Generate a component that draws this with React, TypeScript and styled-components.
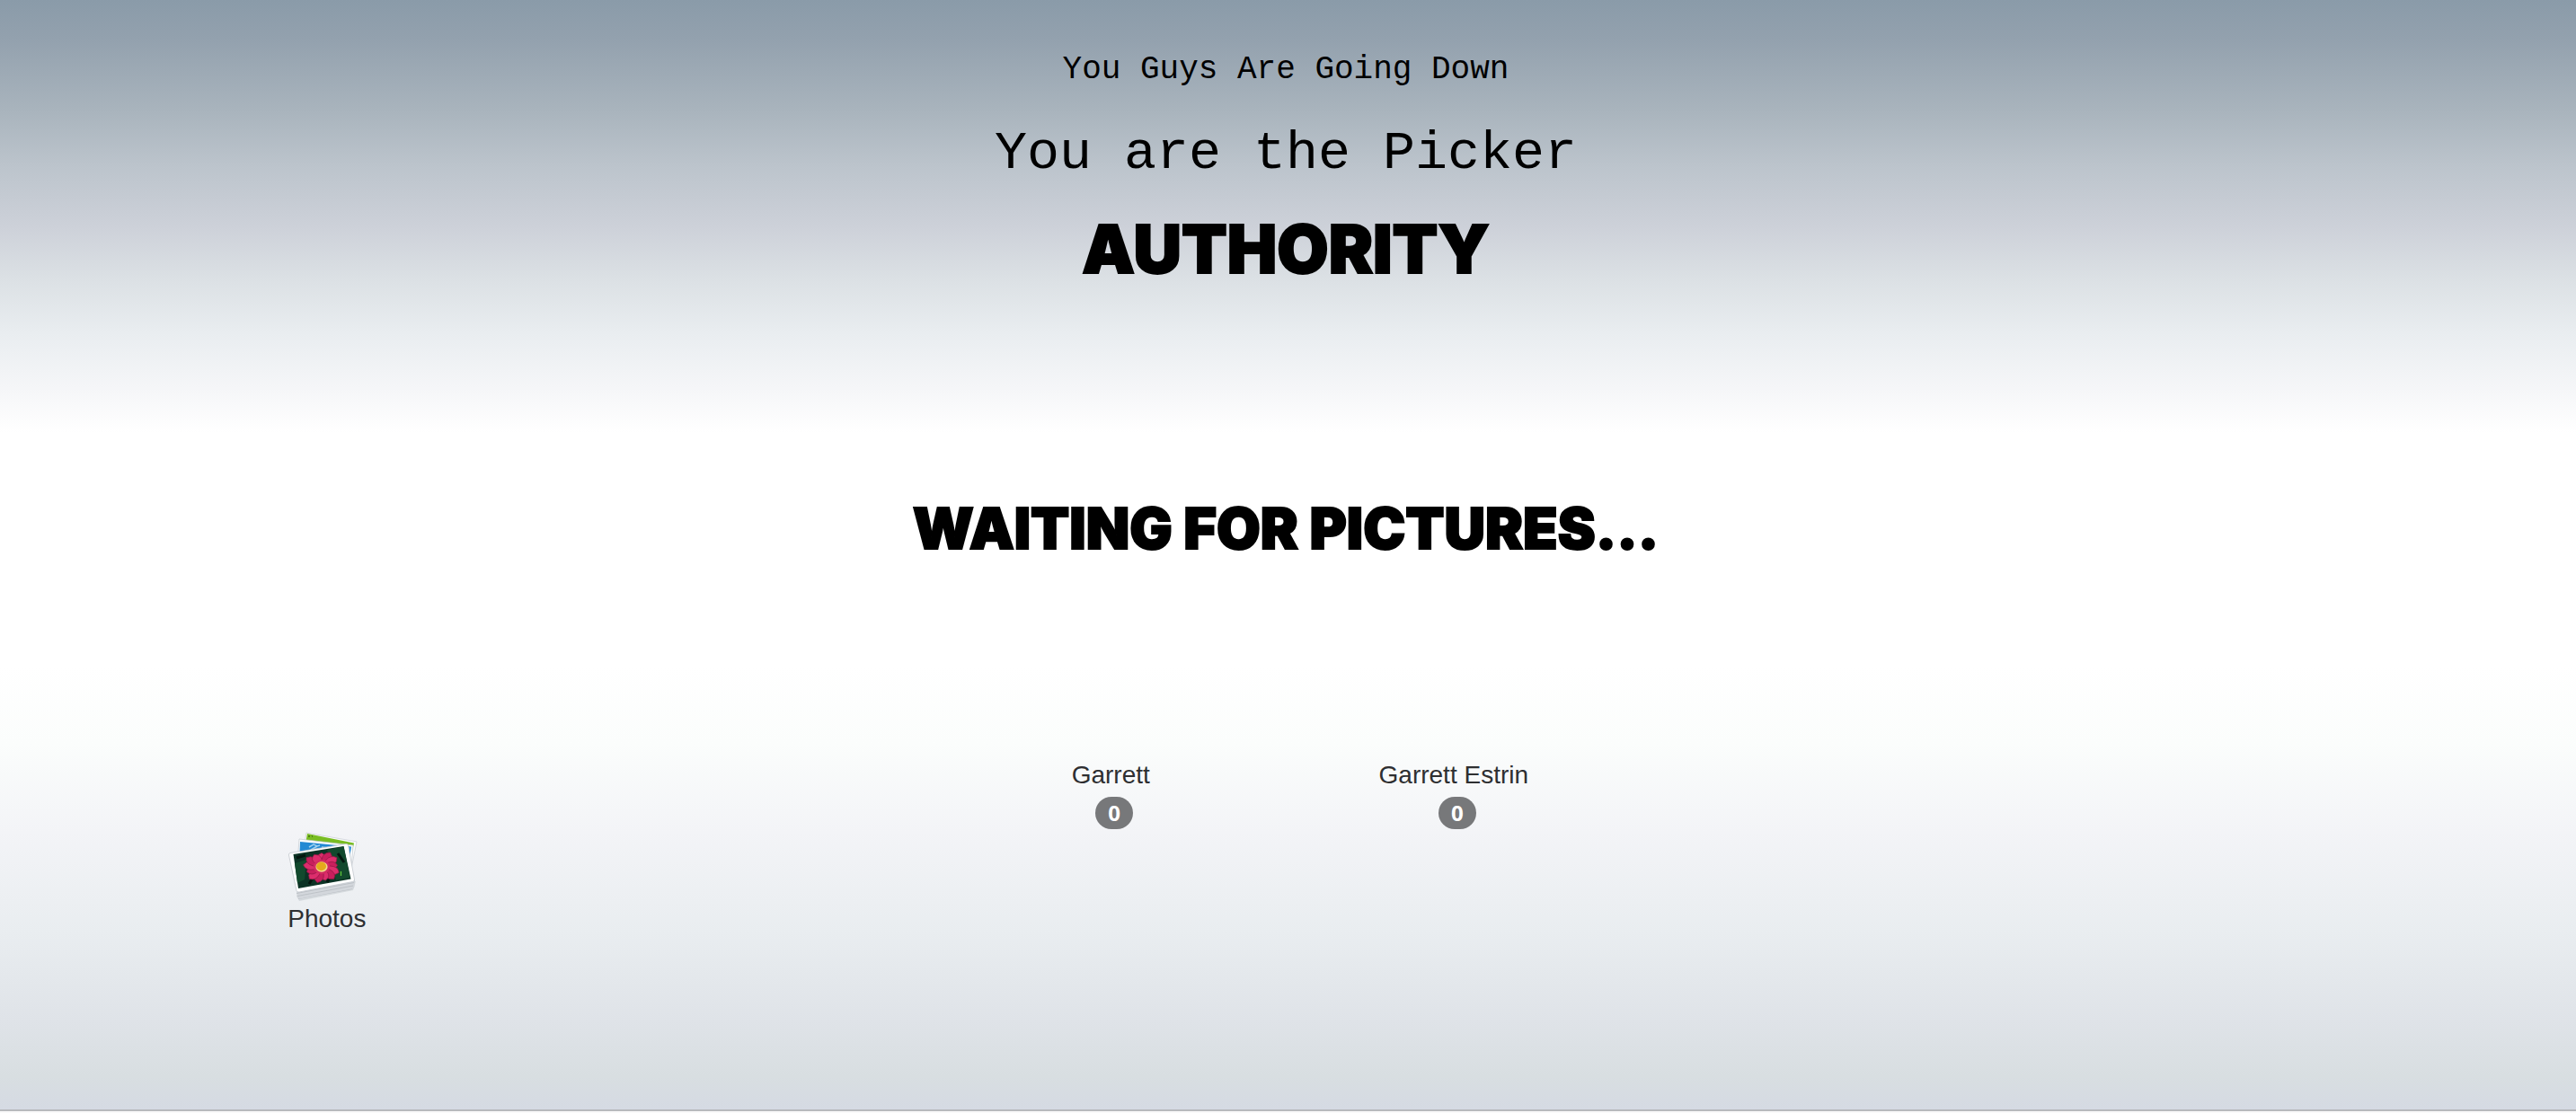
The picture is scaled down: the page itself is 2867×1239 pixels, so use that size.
import React from "react";
import styled, { createGlobalStyle } from "styled-components";

const GlobalStyle = createGlobalStyle`
  *, *::before, *::after { box-sizing: border-box; }
  body { margin: 0; background: #fafafa; color: #2e2f31; font-family: "Liberation Sans", Arial, sans-serif; font-size: 28px; line-height: 40px; }
`;

const Page = styled.main`
  display: flex;
  flex-direction: column;
  padding: 57px 5px 192px 0;
  border-bottom: 2px solid #b8babd;
  background: linear-gradient(
    #8a9ba9 0%, #93a1ae 3.5%, #a9b4bd 10%, #bcc4cc 15%, #cdd1d9 20.5%,
    #dbe0e4 25%, #e9edf0 30%, #f5f6f8 35%, #ffffff 39%, #ffffff 60%,
    #fbfdfc 67%, #f3f4f7 75%, #e9edf0 84%, #dfe3e8 92%, #d8dee1 97%, #d5dae3 100%
  );
`;

const Header = styled.header`
  display: flex;
  flex-direction: column;
  align-items: center;
  text-align: center;
  color: #000;
`;

const TypedLine = styled.p<{ $large?: boolean }>`
  margin: 0;
  font-family: "Liberation Mono", "Courier New", monospace;
  font-size: ${(p) => (p.$large ? 60 : 36)}px;
  line-height: ${(p) => (p.$large ? 68 : 42)}px;
  margin-bottom: ${(p) => (p.$large ? 32 : 38)}px;
`;

const Prompt = styled.h1`
  margin: 0;
  font: 900 74px/80px Inter, sans-serif;
  -webkit-text-stroke: 2px #000;
`;

const Status = styled.h2`
  margin: 237px 0 221px;
  text-align: center;
  color: #000;
  font: 900 63px/68px Inter, sans-serif;
  -webkit-text-stroke: 2px #000;
`;

const Container = styled.div`
  width: 80%;
  margin: 0 auto;
`;

const Players = styled.ul`
  display: grid;
  grid-template-columns: repeat(6, 1fr);
  margin: 0;
  padding: 0;
  list-style: none;
`;

const Player = styled.li`
  display: flex;
  flex-direction: column;
  align-items: center;
  gap: 4px;

  &:first-child { grid-column-start: 3; }
`;

const Name = styled.span`
  padding-right: 8px;
`;

const Badge = styled.span`
  padding: 6px 14px;
  border-radius: 20px;
  background: #77787a;
  color: #fff;
  font: 700 24px/24px "Open Sans", sans-serif;
`;

const PhotosButton = styled.button`
  display: flex;
  flex-direction: column;
  align-items: flex-start;
  margin-left: 34px;
  padding: 0;
  border: 0;
  background: none;
  color: inherit;
  font: inherit;
  cursor: pointer;

  svg { display: block; }
`;

const petals = Array.from({ length: 13 }, (_, i) => (i * 360) / 13);

function PhotosIcon() {
  return (
    <svg width="80" height="80" viewBox="4 4 80 80" aria-hidden="true">
      <path d="M14 78 L17 84 L77 72 L80 62 Z" fill="#b9bec4" opacity=".45" />
      <path d="M25 8 L81 18 L73 58 L18 50 Z" fill="#fbfcfd" stroke="#c8cdd3" strokeWidth=".7" />
      <path d="M26 9 L78 19.500 L73 44 L22 32 Z" fill="#79bd22" />
      <path d="M27 12h2M31 12h1M75 24h1" stroke="#274411" strokeWidth="1.200" />
      <path d="M17 15 L77 22 L74 62 L14 56 Z" fill="#fbfcfd" stroke="#c4cad0" strokeWidth=".7" />
      <path d="M18 18 L75 23.500 L71 50 L17 46 Z" fill="#2289d3" />
      <path d="M28 24l5-3 4 2 3-1M30 27l7-4M42 24l8 1M72 24v5" stroke="#9fd0ee" strokeWidth="1.500" fill="none" />
      <path d="M6 31 L16 80 L16 82 L76 71 L79 61 L77 58 Z" fill="#b9bec4" />
      <path d="M14 72 L78.500 59 V68 Q78.500 70 76 70.500 L18 81.500 Q15 82 14.500 79 Z" fill="#d3d7dc" />
      <path d="M14 75.500L78 63.500M15 78.500L77 67" stroke="#b7bcc2" strokeWidth=".8" />
      <path d="M7 30.500 L69 20.500 Q71 20.200 71.500 22 L78.500 60 Q78.800 62 76.500 62.500 L17 74 Q14.500 74.500 14 72.500 L5.500 33 Q5 31 7 30.500Z" fill="#fff" stroke="#c3c8ce" strokeWidth=".8" />
      <path d="M10.500 32 L66.500 23 L74.500 59.500 L16 70 Z" fill="#0c3325" />
      <path d="M48 27 L66.500 23.500 L73.500 58 L58 61Z M12 42L25 38L23 60L15 64Z" fill="#12492d" />
      <path d="M14 36l10-3M28 65l6-10M48 63l5-8M60 31l7 10" stroke="#04160f" strokeWidth="3" />
      <g transform="translate(42 46) scale(1.14 1)">
        {petals.map((angle, i) => (
          <path
            key={angle}
            d="M-2 -4 Q-6 -12 -2.500 -16.500 L0 -18.500 L3 -15.500 Q5 -11 2 -4Z"
            fill={i % 2 ? "#c81f5d" : "#dc2d6c"}
            stroke="#8f1843"
            strokeWidth=".6"
            transform={`rotate(${angle}) scale(1.1 ${i % 3 ? 0.98 : 0.84})`}
          />
        ))}
        <circle r="8" fill="#d32b62" />
        <circle r="5.800" fill="#f0d98c" />
        <circle cx="-.4" cy="-.6" r="4.800" fill="#e5a91d" />
      </g>
      <path d="M63.500 51v5" stroke="#62c83b" strokeWidth="1.200" />
    </svg>
  );
}

const players = [
  { name: "Garrett", score: 0 },
  { name: "Garrett Estrin", score: 0 },
];

export default function App() {
  return (
    <>
      <GlobalStyle />
      <Page>
        <Header>
          <TypedLine>You Guys Are Going Down</TypedLine>
          <TypedLine $large>You are the Picker</TypedLine>
          <Prompt>AUTHORITY</Prompt>
        </Header>
        <Status>WAITING FOR PICTURES...</Status>
        <Container>
          <Players>
            {players.map((player) => (
              <Player key={player.name}>
                <Name>{player.name}</Name>
                <Badge>{player.score}</Badge>
              </Player>
            ))}
          </Players>
          <PhotosButton type="button">
            <PhotosIcon />
            Photos
          </PhotosButton>
        </Container>
      </Page>
    </>
  );
}
